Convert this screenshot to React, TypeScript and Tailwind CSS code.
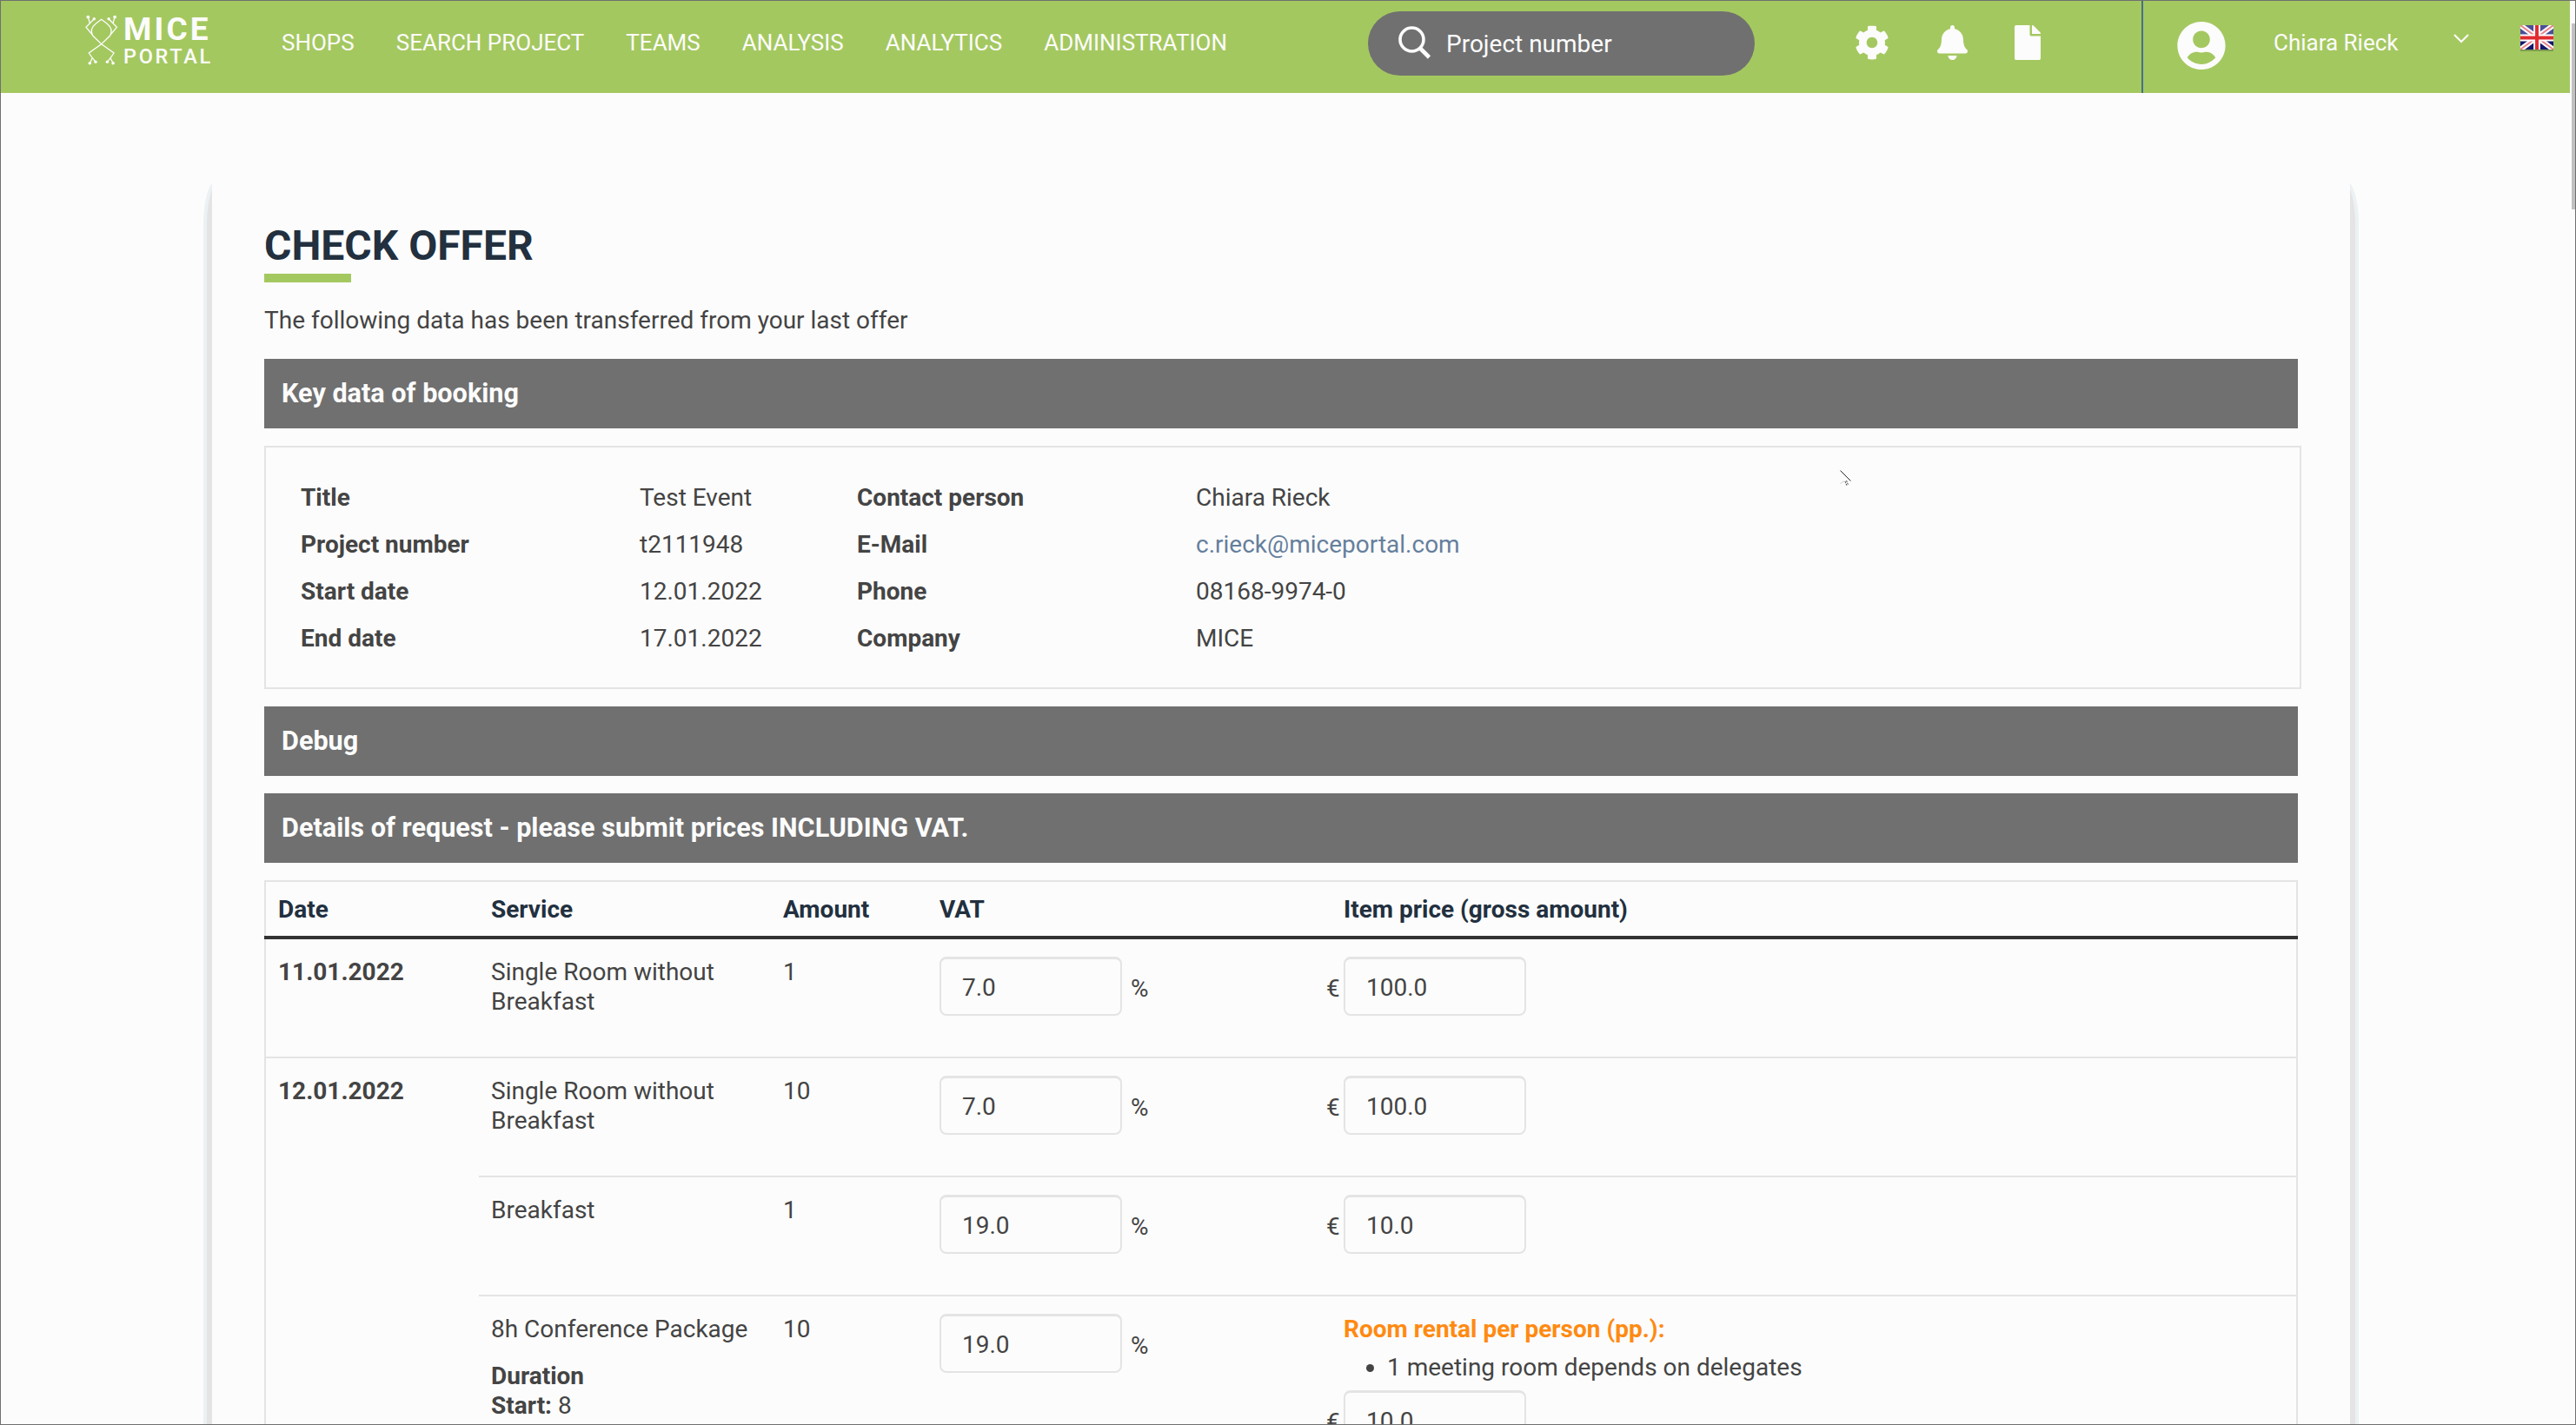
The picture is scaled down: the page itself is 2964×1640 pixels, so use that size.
import React from 'react';
import { FaBell, FaCog, FaFile, FaUserCircle } from 'react-icons/fa';

const navItems = ['SHOPS', 'SEARCH PROJECT', 'TEAMS', 'ANALYSIS', 'ANALYTICS', 'ADMINISTRATION'];

const bookingData = [
  ['Title', 'Test Event', 'Contact person', 'Chiara Rieck'],
  ['Project number', 't2111948', 'E-Mail', 'c.rieck@miceportal.com'],
  ['Start date', '12.01.2022', 'Phone', '08168-9974-0'],
  ['End date', '17.01.2022', 'Company', 'MICE'],
];

type Item = {
  service: string;
  amount: number;
  vat: string;
  price: string;
  start?: string;
  rental?: string;
};

const days: { date: string; items: Item[] }[] = [
  {
    date: '11.01.2022',
    items: [{ service: 'Single Room without Breakfast', amount: 1, vat: '7.0', price: '100.0' }],
  },
  {
    date: '12.01.2022',
    items: [
      { service: 'Single Room without Breakfast', amount: 10, vat: '7.0', price: '100.0' },
      { service: 'Breakfast', amount: 1, vat: '19.0', price: '10.0' },
      {
        service: '8h Conference Package',
        amount: 10,
        vat: '19.0',
        price: '10.0',
        start: '8',
        rental: '1 meeting room depends on delegates',
      },
    ],
  },
];

const Logo = () => (
  <div className="flex w-[166px] text-[#fcfcfc]">
    <svg className="mt-[16px] h-[58px] w-[38px]" viewBox="0 0 38 58" fill="none" stroke="currentColor" strokeWidth="1.3">
      <path d="M18.700 5.300 L12.500 10 C7.500 14 6 19 8.700 24 L18.700 33.700 L28.700 24 C31.400 19 29.900 14 24.900 10 Z" />
      <path d="M3.300 2.300 L5.300 9.500 M10.300 4.700 L1 14.300 L8.300 23" />
      <path d="M34.100 2.300 L32.100 9.500 M27.100 4.700 L36.400 14.300 L29.100 23" />
      <path d="M18.700 33.700 L4.300 44 L8.300 49.700 L5.300 55.700 M8.300 49.700 L12 54.300" />
      <path d="M18.700 33.700 L33.100 44 L29.100 49.700 L32.100 55.700 M29.100 49.700 L25.400 54.300" />
      <g fill="currentColor" stroke="none">
        <circle cx="3.300" cy="2.600" r="1.9" />
        <circle cx="10.300" cy="4.700" r="1.7" />
        <circle cx="34.100" cy="2.600" r="1.9" />
        <circle cx="27.100" cy="4.700" r="1.7" />
        <circle cx="5.300" cy="55.700" r="1.8" />
        <circle cx="12" cy="54.300" r="1.7" />
        <circle cx="32.100" cy="55.700" r="1.8" />
        <circle cx="25.400" cy="54.300" r="1.7" />
      </g>
    </svg>
    <div className="mt-[12px] ml-[6px]">
      <div className="text-[37px] leading-[42px] font-bold tracking-[3.1px]">MICE</div>
      <div className="-mt-[4px] text-[23.5px] leading-[28px] font-medium tracking-[2.7px]">PORTAL</div>
    </div>
  </div>
);

const Flag = () => (
  <svg className="mt-[28px] ml-[141px] h-[30px] w-[38px]" viewBox="0 0 39 30" preserveAspectRatio="none">
    <rect width="39" height="30" rx="1" fill="#14166b" />
    <rect width="39" height="13" fill="#4c4f96" />
    <path d="M0 0 L39 28 M39 0 L0 28" stroke="#fff" strokeWidth="6" />
    <path d="M0 0 L39 28 M39 0 L0 28" stroke="#e8808a" strokeWidth="2" />
    <path d="M19.500 0 V30 M0 14.500 H39" stroke="#fff" strokeWidth="8" />
    <path d="M19.500 0 V30 M0 14.500 H39" stroke="#e02b30" strokeWidth="4" />
    <path d="M0 29 H39" stroke="#7e9d50" strokeWidth="2" />
  </svg>
);

const Header = () => (
  <header className="flex h-[106px] w-[2956px] bg-[#a4c860] pl-[97px] text-[#fcfcfc]">
    <Logo />
    <nav className="mt-[31px] ml-[60px] flex w-[1250px] gap-[48px] text-[26px] leading-[34px]">
      {navItems.map((item) => (
        <a key={item} className="whitespace-nowrap">
          {item}
        </a>
      ))}
    </nav>
    <div className="mt-[12px] flex h-[74px] w-[445px] rounded-full bg-[#707070]">
      <svg className="mt-[17px] ml-[35px] h-[38px] w-[38px]" viewBox="0 0 38 38" fill="none" stroke="currentColor">
        <circle cx="15.500" cy="15.500" r="13.500" strokeWidth="3.600" />
        <path d="M25 25.500 L35.500 36" strokeWidth="4.600" />
      </svg>
      <span className="mt-[21px] ml-[17px] text-[28px] leading-[34px]">Project number</span>
    </div>
    <div className="mt-[28px] ml-[115px] flex w-[330px]">
      <FaCog className="h-[40px] w-[40px]" />
      <FaBell className="ml-[55px] h-[40px] w-[35px]" />
      <FaFile className="ml-[54px] h-[40px] w-[30px]" />
    </div>
    <div className="flex border-l-2 border-[#45708a]">
      <FaUserCircle className="mt-[23px] ml-[39px] h-[57px] w-[56px]" />
      <span className="mt-[31px] ml-[55px] text-[26px] leading-[34px]">Chiara Rieck</span>
      <svg className="mt-[37px] ml-[63px] h-[12px] w-[18px]" viewBox="0 0 18 12" fill="none" stroke="currentColor" strokeWidth="2">
        <path d="M1 2 L9 10 L17 2" />
      </svg>
    </div>
    <div className="-ml-[82px]">
      <Flag />
    </div>
  </header>
);

const SectionBar = ({ title }: { title: string }) => (
  <h2 className="flex h-[80px] w-[2340px] items-center bg-[#707070] pl-[20px] text-[30.6px] font-bold text-[#fcfcfc]">
    {title}
  </h2>
);

const NumberInput = ({ value }: { value: string }) => (
  <input
    className="h-[68px] w-[210px] rounded-[8px] border-2 border-t-[3px] border-[#e4e4e4] bg-transparent px-[24px] pt-px text-[28px]"
    defaultValue={value}
  />
);

const PriceInput = ({ value }: { value: string }) => (
  <div className="-mt-px -ml-[20px] flex">
    <span className="w-[20px] pt-[20px]">€</span>
    <NumberInput value={value} />
  </div>
);

const BookingBox = () => (
  <div className="mt-[20px] flex h-[280px] w-[2344px] flex-col gap-[20px] border-2 border-[#e4e4e4] pt-[41px] pl-[40px]">
    {bookingData.map(([label, value, contactLabel, contactValue]) => (
      <div key={label} className="grid grid-cols-[390px_250px_390px_1fr]">
        <span className="font-bold">{label}</span>
        <span>{value}</span>
        <span className="font-bold">{contactLabel}</span>
        <span className={contactLabel === 'E-Mail' ? 'text-[#667f9c]' : ''}>{contactValue}</span>
      </div>
    ))}
  </div>
);

const ItemRow = ({ item, first }: { item: Item; first: boolean }) => (
  <div
    className={`grid grid-cols-[336px_180px_465px_1fr] pt-[21px] pl-[14px] ${
      first ? 'min-h-[135px]' : 'min-h-[137px] border-t-2 border-[#e4e4e4]'
    }`}
  >
    <div className="pr-[20px]">
      {item.service}
      {item.start && (
        <div className="mt-[20px]">
          <div className="font-bold">Duration</div>
          <b>Start:</b> {item.start}
        </div>
      )}
    </div>
    <div>{item.amount}</div>
    <div className="-mt-px flex">
      <NumberInput value={item.vat} />
      <span className="ml-[10px] pt-[20px]">%</span>
    </div>
    <div>
      {item.rental && (
        <>
          <div className="font-bold text-[#ff8a12]">Room rental per person (pp.):</div>
          <ul className="my-[10px] list-disc pl-[50px]">
            <li>{item.rental}</li>
          </ul>
        </>
      )}
      <PriceInput value={item.price} />
    </div>
  </div>
);

const OfferTable = () => (
  <div className="mt-[20px] w-[2340px]">
    <div className="grid h-[64px] grid-cols-[245px_336px_180px_465px_1fr] border-2 border-b-0 border-[#e4e4e4] pt-[15px] pl-[14px] font-bold text-[#22303f]">
      <span>Date</span>
      <span>Service</span>
      <span>Amount</span>
      <span>VAT</span>
      <span>Item price (gross amount)</span>
    </div>
    <div className="h-[4px] bg-[#333333]" />
    <div className="border-x-2 border-[#e4e4e4]">
      {days.map((day, i) => (
        <div
          key={day.date}
          className={`grid grid-cols-[245px_1fr] ${i > 0 ? 'border-t-2 border-[#e4e4e4]' : ''}`}
        >
          <div className="pt-[21px] pl-[14px] font-bold">{day.date}</div>
          <div>
            {day.items.map((item, j) => (
              <ItemRow key={j} item={item} first={j === 0} />
            ))}
          </div>
        </div>
      ))}
    </div>
  </div>
);

export default function App() {
  return (
    <div className="relative flex h-[1640px] w-[2964px] overflow-hidden border border-[#707070] bg-[#fcfcfc] font-['Roboto',sans-serif] text-[28px] leading-[34px] text-[#444444]">
      <div className="w-[2957px] shrink-0">
        <Header />
        {/* Soft two-step shadow on both sides of the card */}
        <div className="mt-[102px] ml-[233px] w-[2480px] rounded-t-[14px_50px] bg-[#ecf1f4] px-[4px]">
          <div className="rounded-t-[14px_50px] bg-[#e4e4e4] px-[6px]">
            <main className="h-[1500px] bg-[#fcfcfc] pt-[45px] pl-[60px]">
              <h1 className="text-[48px] leading-[58px] font-bold text-[#22303f]">CHECK OFFER</h1>
              <div className="mt-[3px] h-[10px] w-[100px] bg-[#a4c860]" />
              <p className="mt-[27px] mb-[27px]">The following data has been transferred from your last offer</p>
              <SectionBar title="Key data of booking" />
              <BookingBox />
              <div className="mt-[20px] flex flex-col gap-[20px]">
                <SectionBar title="Debug" />
                <SectionBar title="Details of request - please submit prices INCLUDING VAT." />
              </div>
              <OfferTable />
            </main>
          </div>
        </div>
      </div>
      {/* Scrollbar */}
      <div className="w-[5px] pt-[26px] pl-px">
        <div className="h-[214px] w-[4px] bg-[#c1c1c1]" />
      </div>
      {/* Mouse pointer */}
      <svg className="absolute top-[539px] left-[2115px] h-[22px] w-[16px]" viewBox="0 0 16 22" fill="none" stroke="#111">
        <path d="M1.500 1.500 L13.500 13.500" strokeWidth="0.9" />
        <path d="M7 14 L9 19 M8.500 13 L10.500 18" strokeWidth="0.8" strokeDasharray="2 1" />
        <path d="M1.500 17 L4 14.500 L7 14" stroke="#ccc" />
      </svg>
    </div>
  );
}
